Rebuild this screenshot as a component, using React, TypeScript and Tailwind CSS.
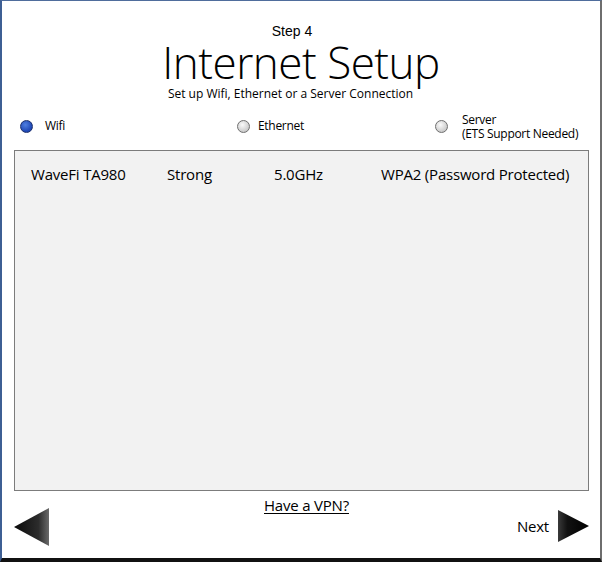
import React from 'react';

function Radio({ checked }: { checked?: boolean }) {
  return checked ? (
    <span className="block w-[13px] h-[13px] rounded-full border border-[#1c2f6b] bg-[radial-gradient(circle_at_40%_35%,#4f7fe0,#1e46b4_70%)]" />
  ) : (
    <span className="block w-[13px] h-[13px] rounded-full border border-[#6f6f6f] bg-[radial-gradient(circle_at_40%_35%,#fafafa,#c8c8c8_75%)]" />
  );
}

function Arrow({ dir }: { dir: 'left' | 'right' }) {
  const id = `grad-${dir}`;
  return dir === 'left' ? (
    <svg width="36" height="38" viewBox="0 0 36 38">
      <defs>
        <linearGradient id={id} x1="0" y1="0" x2="1" y2="0">
          <stop offset="0" stopColor="#0a0a0a" />
          <stop offset="0.7" stopColor="#2c2c2c" />
          <stop offset="1" stopColor="#6a6a6a" />
        </linearGradient>
      </defs>
      <polygon points="0,19 35,0 35,38" fill={`url(#${id})`} />
    </svg>
  ) : (
    <svg width="31" height="32" viewBox="0 0 31 32">
      <defs>
        <linearGradient id={id} x1="0" y1="0" x2="1" y2="0">
          <stop offset="0" stopColor="#3a3a3a" />
          <stop offset="0.3" stopColor="#111" />
          <stop offset="1" stopColor="#000" />
        </linearGradient>
      </defs>
      <polygon points="0,0 31,16 0,32" fill={`url(#${id})`} />
    </svg>
  );
}

export default function App() {
  const network = ['WaveFi TA980', 'Strong', '5.0GHz', 'WPA2 (Password Protected)'];

  return (
    <div
      className="w-[602px] h-[562px] bg-white border-t border-t-[#4f6d9c] border-l-2 border-l-[#3e5f94] border-r-2 border-r-[#6e6e6e] border-b-4 border-b-[#111] flex flex-col text-black"
      style={{ fontFamily: '"Open Sans", "Noto Sans", sans-serif' }}
    >
      {/* Header */}
      <div className="flex flex-col items-center pt-[21px]">
        <div className="text-[14px] leading-[18px] pr-[18px]" style={{ fontFamily: '"Liberation Sans", sans-serif' }}>Step 4</div>
        <div className="text-[44px] leading-[44px] font-light tracking-[-0.5px]">Internet Setup</div>
        <div className="text-[12px] leading-[16px] mt-[2px] pr-[21px]">Set up Wifi, Ethernet or a Server Connection</div>
      </div>

      {/* Connection type */}
      <div className="flex items-center h-[40px] mt-[4px] mb-[4px] text-[12px] tracking-[-0.3px]">
        <div className="flex items-center gap-[12px] pl-[18px] w-[235px]">
          <Radio checked />
          <span>Wifi</span>
        </div>
        <div className="flex items-center gap-[8px] w-[198px]">
          <Radio />
          <span>Ethernet</span>
        </div>
        <div className="flex items-center gap-[14px]">
          <Radio />
          <div className="leading-[14px] pt-[1px]">
            <div>Server</div>
            <div>(ETS Support Needed)</div>
          </div>
        </div>
      </div>

      {/* Network list */}
      <div className="ml-[12px] mr-[11px] h-[341px] border border-[#7c7c7c] bg-[#f2f2f2]">
        <div className="flex items-center h-[47px] text-[15px] tracking-[-0.2px]">
          <span className="pl-[16px] w-[152px]">{network[0]}</span>
          <span className="w-[107px]">{network[1]}</span>
          <span className="w-[107px]">{network[2]}</span>
          <span>{network[3]}</span>
        </div>
      </div>

      {/* Footer */}
      <div className="flex flex-col items-center mt-[4px] pl-[11px]">
        <a href="#" className="text-[15px] leading-[20px] underline underline-offset-2 tracking-[-0.2px]">Have a VPN?</a>
      </div>
      <div className="flex items-end justify-between pl-[12px] pr-[11px] -mt-[7px]">
        <Arrow dir="left" />
        <div className="flex items-center gap-[9px] mb-[4px]">
          <span className="text-[15px] tracking-[-0.2px]">Next</span>
          <Arrow dir="right" />
        </div>
      </div>
    </div>
  );
}
